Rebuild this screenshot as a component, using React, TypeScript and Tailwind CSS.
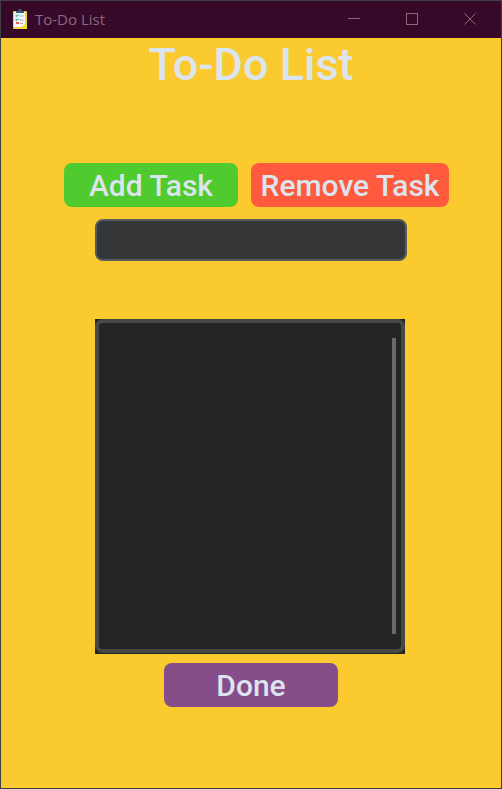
import { useState } from "react";

function ClipboardIcon() {
  return (
    <svg width="16" height="20" viewBox="0 0 16 20" aria-hidden="true">
      <rect x="1" y="2" width="14" height="18" rx="1" fill="#f6cf4a" />
      <path d="M10 20h4a1 1 0 0 0 1-1V9z" fill="#f3dd1c" />
      <path d="M2 3h11v12l-3 3H2z" fill="#f3f6f4" />
      <path d="M4 4V2h2.500V0h3v2H12v2z" fill="#3f5b78" />
      <path d="M3.500 6.500l1 1 2-2M3.500 10.500l1 1 2-2" fill="none" stroke="#2fc3a4" strokeWidth="1.200" />
      <path d="M7.500 7h4M7.500 11h4M8 14.500h3" stroke="#9aa9b4" strokeWidth="1" />
      <rect x="4" y="13" width="3" height="2" fill="#ee5b4d" />
    </svg>
  );
}

function TitleBar() {
  const control = "flex h-full w-[58px] items-center justify-center text-[#8b6880]";
  return (
    <header className="flex h-[37px] items-center bg-[#360928] pr-0.5 pb-px pl-[11px]">
      <ClipboardIcon />
      <span className="ml-[7px] flex-1 font-['Open_Sans','Noto_Sans',sans-serif] text-[15px] leading-5 text-[#8b6880]">
        To-Do List
      </span>
      <button type="button" aria-label="Minimize" className={control}>
        <svg width="12" height="12" viewBox="0 0 12 12" stroke="currentColor">
          <path d="M0 5.500h12" />
        </svg>
      </button>
      <button type="button" aria-label="Maximize" className={control}>
        <svg width="12" height="12" viewBox="0 0 12 12" stroke="currentColor" fill="none">
          <rect x="0.500" y="0.500" width="11" height="11" />
        </svg>
      </button>
      <button type="button" aria-label="Close" className={control}>
        <svg width="12" height="12" viewBox="0 0 12 12" stroke="currentColor">
          <path d="M0.500 0.500l11 11M11.500 0.500l-11 11" />
        </svg>
      </button>
    </header>
  );
}

export default function App() {
  const [task, setTask] = useState("");
  const [list, setList] = useState("");
  const action = "h-11 rounded-lg pt-0.5 text-3xl font-medium text-[#dce4ee]";

  const addTask = () => {
    if (!task.trim()) return;
    setList(list ? list + "\n" + task : task);
    setTask("");
  };
  const removeTask = () => setList(list.split("\n").slice(0, -1).join("\n"));

  return (
    <div className="flex min-h-screen flex-col border border-[#3f4044] bg-[#fbca2f] font-[Roboto,sans-serif]">
      <TitleBar />
      <main className="flex flex-1 flex-col items-center">
        <h1 className="text-[45px] leading-[54px] font-medium text-[#dce4ee]">To-Do List</h1>
        <div className="mt-[71px] flex gap-[13px] pl-[11px]">
          <button type="button" onClick={addTask} className={`${action} w-[174px] bg-[#50cb2f]`}>
            Add Task
          </button>
          <button type="button" onClick={removeTask} className={`${action} w-[198px] bg-[#ff5a3d]`}>
            Remove Task
          </button>
        </div>
        <div className="mt-3 flex w-[312px] flex-col">
          <input
            type="text"
            aria-label="New task"
            value={task}
            onChange={(e) => setTask(e.target.value)}
            className="h-[42px] rounded-lg border-2 border-[#565b5e] bg-[#343638] px-3 text-xl text-[#dce4ee] outline-none"
          />
          <div className="relative mt-[58px] mr-0.5 flex h-[335px] bg-[#242424] pb-px">
            <textarea
              aria-label="Tasks"
              value={list}
              onChange={(e) => setList(e.target.value)}
              className="flex-1 resize-none rounded-lg border-4 border-[#484848] bg-[#242424] px-3 py-2 text-xl text-[#dce4ee] outline-none"
            />
            <div className="absolute top-[19px] right-[9px] bottom-5 w-1 bg-[#696969]" />
          </div>
        </div>
        <button type="button" onClick={removeTask} className={`${action} mt-[9px] w-[174px] bg-[#854d8a]`}>
          Done
        </button>
      </main>
    </div>
  );
}
